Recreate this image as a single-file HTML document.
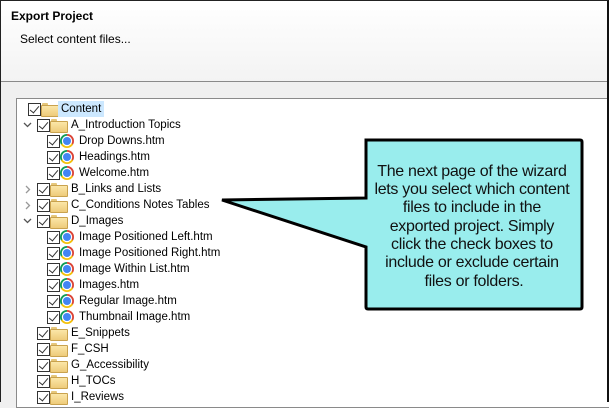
<!DOCTYPE html>
<html><head><meta charset="utf-8"><style>
*{margin:0;padding:0;box-sizing:border-box}
body{width:609px;height:402px;overflow:hidden;position:relative;background:#f0f0f0;font-family:"Liberation Sans",sans-serif;font-size:12px;color:#000}
#hdr{position:absolute;left:0;top:0;width:609px;height:82px;background:linear-gradient(#fff,#f3f3f3);border-bottom:1px solid #8a8a8a}
#frame{position:absolute;left:0;top:0;width:609px;height:402px;border-left:1px solid #222;border-top:1px solid #222;border-right:2px solid #111}
.t1{position:absolute;left:11px;top:9px;font-weight:bold;font-size:12px}
.t2{position:absolute;left:20px;top:32px;font-size:12px}
#panel{position:absolute;left:16px;top:98px;width:600px;height:310px;background:#fff;border:1px solid #8a8a8a}
.row{position:absolute;height:16px;line-height:16px;white-space:nowrap;font-size:11.5px}
.cb{position:absolute;width:13px;height:13px;border:1px solid #333;background:#fff}
.cb:after{content:"";position:absolute;left:3px;top:0px;width:4px;height:8px;border-right:1.5px solid #333;border-bottom:1.5px solid #333;transform:rotate(40deg)}
.fd{position:absolute;width:16px;height:12px}
.fd:before{content:"";position:absolute;left:1px;top:0;width:6px;height:3px;background:#e6c77a;border-radius:1px 1px 0 0}
.fd:after{content:"";position:absolute;left:0;top:2px;width:16px;height:10px;background:linear-gradient(#fbe6a8,#eecb7a);border:1px solid #c9a24e;border-radius:1px}
.ch{position:absolute;width:14px;height:14px;border-radius:50%;background:conic-gradient(from 0deg,#db4437 0 120deg,#f4c20d 120deg 240deg,#0f9d58 240deg 360deg)}
.ch:after{content:"";position:absolute;left:3px;top:3px;width:8px;height:8px;border-radius:50%;background:#4285f4;box-shadow:0 0 0 1.2px #fff}
</style></head><body>
<div id="hdr"></div>
<div class="t1">Export Project</div>
<div class="t2">Select content files...</div>
<div id="panel"></div>
<div id="tree"></div>
<svg style="position:absolute;left:0;top:0" width="609" height="402">
<path d="M366,140 L580,140 Q582,140 582,142 L582,307 Q582,309 580,309 L368,309 Q366,309 366,307 L366,247 L222,200 L366,198 Z" fill="#99eded" stroke="#000" stroke-width="3" stroke-linejoin="miter"/>
<text font-family="Liberation Sans,sans-serif" font-size="16" fill="#111" text-anchor="middle" letter-spacing="-0.3">
<tspan x="474" y="176">The next page of the wizard</tspan>
<tspan x="474" y="194">lets you select which content</tspan>
<tspan x="474" y="212">files to include in the</tspan>
<tspan x="474" y="231">exported project. Simply</tspan>
<tspan x="474" y="249">click the check boxes to</tspan>
<tspan x="474" y="267">include or exclude certain</tspan>
<tspan x="474" y="286">files or folders.</tspan>
</text>
</svg>
<div id="frame"></div>
<script>
var rows=[[0,"Content","f"],[1,"A_Introduction Topics","fo"],[2,"Drop Downs.htm","c"],[2,"Headings.htm","c"],[2,"Welcome.htm","c"],[1,"B_Links and Lists","fc"],[1,"C_Conditions Notes Tables","fc"],[1,"D_Images","fo"],[2,"Image Positioned Left.htm","c"],[2,"Image Positioned Right.htm","c"],[2,"Image Within List.htm","c"],[2,"Images.htm","c"],[2,"Regular Image.htm","c"],[2,"Thumbnail Image.htm","c"],[1,"E_Snippets","f"],[1,"F_CSH","f"],[1,"G_Accessibility","f"],[1,"H_TOCs","f"],[1,"I_Reviews","f"]];
var h="";
rows.forEach(function(r,i){var y=101+i*16;var cx,ix,tx;
if(r[0]==2){cx=47;ix=60;tx=79}
if(r[0]==1){cx=37;ix=50;tx=71}
if(r[0]==0){cx=28;ix=41;tx=61}
if(r[2]=="fo")h+='<svg style="position:absolute;left:23px;top:'+(y+5)+'px" width="9" height="6"><path d="M1,1 L4.5,4.5 L8,1" fill="none" stroke="#555" stroke-width="1.3"/></svg>';
if(r[2]=="fc")h+='<svg style="position:absolute;left:25px;top:'+(y+4)+'px" width="6" height="9"><path d="M1,1 L4.5,4.5 L1,8" fill="none" stroke="#999" stroke-width="1.3"/></svg>';
h+='<div class="cb" style="left:'+cx+'px;top:'+(y+2)+'px"></div>';
if(r[2]=="c")h+='<div class="ch" style="left:'+ix+'px;top:'+(y+1)+'px"></div>';
else h+='<div class="fd" style="left:'+ix+'px;top:'+(y+2)+'px"></div>';
if(i==0)h+='<div style="position:absolute;left:58px;top:'+y+'px;width:46px;height:16px;background:#cce8ff"></div>';
h+='<div class="row" style="left:'+tx+'px;top:'+y+'px">'+r[1]+'</div>';});
document.getElementById("tree").innerHTML=h;
</script>
</body></html>
